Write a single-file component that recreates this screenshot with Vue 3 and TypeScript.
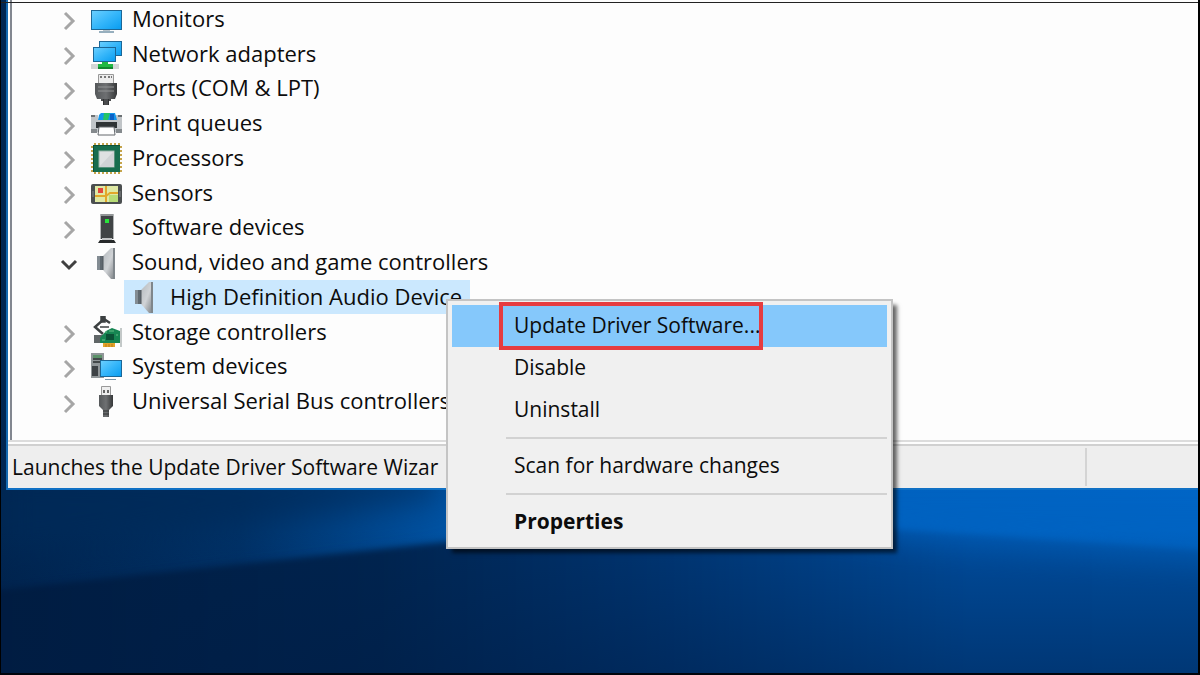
<script setup lang="ts">
import { ref } from 'vue'

interface Category {
  name: string
  icon: string
  children?: string[]
}

const categories: Category[] = [
  { name: 'Monitors', icon: 'monitor' },
  { name: 'Network adapters', icon: 'network' },
  { name: 'Ports (COM & LPT)', icon: 'port' },
  { name: 'Print queues', icon: 'printer' },
  { name: 'Processors', icon: 'cpu' },
  { name: 'Sensors', icon: 'sensor' },
  { name: 'Software devices', icon: 'tower' },
  { name: 'Sound, video and game controllers', icon: 'speaker', children: ['High Definition Audio Device'] },
  { name: 'Storage controllers', icon: 'storage' },
  { name: 'System devices', icon: 'system' },
  { name: 'Universal Serial Bus controllers', icon: 'usb' },
]

interface Row {
  name: string
  icon: string
  child: boolean
  open: boolean
}

const rows: Row[] = categories.flatMap((c) => [
  { name: c.name, icon: c.icon, child: false, open: !!c.children },
  ...(c.children ?? []).map((name) => ({ name, icon: c.icon, child: true, open: false })),
])

const selected = ref('High Definition Audio Device')

const menuGroups: { label: string; kind?: 'hot' | 'bold' }[][] = [
  [{ label: 'Update Driver Software...', kind: 'hot' }, { label: 'Disable' }, { label: 'Uninstall' }],
  [{ label: 'Scan for hardware changes' }],
  [{ label: 'Properties', kind: 'bold' }],
]
</script>

<template>
  <div class="desktop">
    <svg class="wallpaper" viewBox="0 0 1200 675" preserveAspectRatio="none" aria-hidden="true">
      <defs>
        <linearGradient id="base" x1="0" x2="1" y1="0" y2="0">
          <stop offset="0" stop-color="#002550" />
          <stop offset=".2" stop-color="#003268" />
          <stop offset=".37" stop-color="#0052a2" />
          <stop offset=".75" stop-color="#0062c0" />
          <stop offset="1" stop-color="#0066c8" />
        </linearGradient>
        <linearGradient id="lower" x1="0" x2="1" y1="0" y2="0">
          <stop offset="0" stop-color="#001c40" />
          <stop offset=".3" stop-color="#00244f" />
          <stop offset=".5" stop-color="#003470" />
          <stop offset=".75" stop-color="#004c9c" />
          <stop offset="1" stop-color="#004e9e" />
        </linearGradient>
        <linearGradient id="fade" x1="0" x2="0" y1="0" y2="1">
          <stop offset="0" stop-color="#001c44" stop-opacity="0" />
          <stop offset="1" stop-color="#001c44" stop-opacity=".45" />
        </linearGradient>
        <filter id="soft" x="-10%" y="-20%" width="120%" height="140%" color-interpolation-filters="sRGB">
          <feGaussianBlur stdDeviation="3" />
        </filter>
        <filter id="wide" x="-20%" y="-60%" width="140%" height="220%" color-interpolation-filters="sRGB">
          <feGaussianBlur stdDeviation="16" />
        </filter>
      </defs>
      <rect width="1200" height="675" fill="url(#base)" />
      <path d="M0 470H440V496L0 560Z" fill="#002a58" opacity=".7" filter="url(#wide)" />
      <path d="M-20 592L445 542L700 516L1300 556V760H-20Z" fill="url(#lower)" filter="url(#soft)" />
      <path d="M700 500L1240 500V566L900 540Z" fill="#0062c0" opacity=".7" filter="url(#wide)" />
      <rect y="530" width="1200" height="145" fill="url(#fade)" />
    </svg>

    <main class="window">
      <ul class="tree" role="tree" aria-label="Devices">
        <li v-for="row in rows" :key="row.name" class="row" :class="{ child: row.child }" role="treeitem" :aria-selected="selected === row.name">
          <button v-if="!row.child" class="caret" type="button" :aria-label="`Toggle ${row.name}`" :aria-expanded="row.open">
            <svg viewBox="0 0 20 20">
              <path v-if="row.open" d="M3 6L10 13L17 6" fill="none" stroke="#404040" stroke-width="3" />
              <path v-else d="M6 2L14 10L6 18" fill="none" stroke="#a6a6a6" stroke-width="3" />
            </svg>
          </button>
          <button class="node" :class="{ selected: selected === row.name }" type="button" @click="selected = row.name">
            <svg class="icon" viewBox="0 0 32 32" aria-hidden="true">
              <defs>
                <linearGradient id="screen" x1="0" y1="0" x2="1" y2="1">
                  <stop offset="0" stop-color="#6cd0ff" />
                  <stop offset=".5" stop-color="#35b6fa" />
                  <stop offset="1" stop-color="#079cf0" />
                </linearGradient>
                <linearGradient id="metal" x1="0" y1="0" x2="1" y2="1">
                  <stop offset="0" stop-color="#b4b9bd" />
                  <stop offset=".5" stop-color="#d0d3d6" />
                  <stop offset="1" stop-color="#777c80" />
                </linearGradient>
                <linearGradient id="dark" x1="0" x2="1">
                  <stop offset="0" stop-color="#55585a" />
                  <stop offset=".5" stop-color="#6e7072" />
                  <stop offset="1" stop-color="#363839" />
                </linearGradient>
              </defs>
              <g v-if="row.icon === 'monitor'">
                <rect x="1.5" y="7.5" width="30" height="19" fill="url(#screen)" stroke="#1b6797" />
                <path d="M13 27H20V28H13Z" fill="#b8c4cb" />
                <path d="M9 29H24" stroke="#7594a8" stroke-width="1.5" />
              </g>
              <g v-else-if="row.icon === 'network'">
                <rect x="9.5" y="3.5" width="22" height="14" fill="url(#screen)" stroke="#1b6797" />
                <rect x="3.5" y="9.5" width="22" height="14" fill="url(#screen)" stroke="#1b6797" />
                <rect x="1" y="26" width="28" height="5" fill="#d2d6d6" />
                <path d="M12 24H18V26H23V31H8V26H12Z" fill="#1fb843" />
                <path d="M8 30H23" stroke="#118630" stroke-width="2" />
              </g>
              <g v-else-if="row.icon === 'port'">
                <path d="M8.5 1.5H23.5V11H8.5Z" fill="#ececec" stroke="#999" />
                <path d="M10 4H12M14 4H16M18 4H20M21 4H22" stroke="#777" stroke-width="2" />
                <path d="M5 10H27V21L25 26H7L5 21Z" fill="url(#dark)" />
                <path d="M8 14H24M8 18H24" stroke="#929495" />
                <path d="M11 26H21V28H19V32H13V28H11Z" fill="#4a4c4e" />
                <path d="M13.5 26V32M18.5 26V32" stroke="#303233" />
              </g>
              <g v-else-if="row.icon === 'printer'">
                <path d="M1 7H8V12H25V7H32V24H1Z" fill="#c1c5c8" />
                <path d="M1 7H5V9H1ZM28 7H32V9H28Z" fill="#6b7073" />
                <path d="M9 7L11 5H25L27 12H8Z" fill="#1297ec" />
                <path d="M14 5H20L18 12H13Z" fill="#24c466" />
                <path d="M20 6H24V12H20Z" fill="#0b61c6" />
                <path d="M6 14H27V20H6Z" fill="#303436" />
                <path d="M1 21H7V25H1ZM26 21H32V25H26Z" fill="#858a8d" />
                <path d="M9 19H24L25 27H8Z" fill="#fff" stroke="#64696d" />
              </g>
              <g v-else-if="row.icon === 'cpu'">
                <path d="M4 2H30M4 31H30" stroke="#c5a44b" stroke-width="2" stroke-dasharray="2 2" />
                <path d="M2 4V30M31 4V30" stroke="#c5a44b" stroke-width="2" stroke-dasharray="2 2" />
                <rect x="3" y="3" width="27" height="27" fill="#176d4d" />
                <path d="M3.5 30V3.5H30" fill="none" stroke="#0d5239" />
                <rect x="9" y="9" width="15" height="16" fill="#dfe1e2" stroke="#9ab5aa" />
                <path d="M24 9V25H9Z" fill="#d0d3d5" />
              </g>
              <g v-else-if="row.icon === 'sensor'">
                <rect x="1" y="7" width="31" height="20" rx="2" fill="#4b4f50" />
                <rect x="5" y="9" width="23" height="16" fill="#dfe9a4" />
                <path d="M19 18H28V25H19Z" fill="#b7dc76" />
                <path d="M16 9V25M5 19H16L20 16H28" fill="none" stroke="#e2a72a" stroke-width="2" />
                <path d="M8 11H13V16H8Z" fill="#e3483c" />
                <path d="M3 14V20M30 14V20" stroke="#858989" />
              </g>
              <g v-else-if="row.icon === 'tower'">
                <path d="M10 2H24V27H10Z" fill="#404445" />
                <path d="M10 2H24V4H10Z" fill="#929697" />
                <path d="M10.5 2V27M23.5 2V27" stroke="#b2b5b6" />
                <path d="M15 7H19V11H15Z" fill="#29e43b" />
                <path d="M12 26H22V28H12Z" fill="#c0c3c4" />
                <path d="M10 28H24L26 31H8Z" fill="#272a2b" />
              </g>
              <g v-else-if="row.icon === 'speaker'">
                <path d="M7 9H13V23H7Z" fill="#606970" />
                <path d="M7 9H10V23H7Z" fill="#838c93" />
                <path d="M13 9L21 1H25V32H21L13 23Z" fill="url(#metal)" />
                <path d="M24 1V32" stroke="#7f868b" stroke-width="2" />
                <path d="M13 9V23" stroke="#4f575d" />
              </g>
              <g v-else-if="row.icon === 'storage'">
                <path d="M4 19H13V27H4Z" fill="#606667" />
                <path d="M20 7L14 3L5 11L13 18" fill="none" stroke="#3c4041" stroke-width="2.500" />
                <path d="M11 0L15 0L15 6L11 6ZM10 11H19" fill="#3c4041" stroke="#3c4041" stroke-width="1.500" />
                <path d="M10 22L16 15L22 12L30 15V27H10Z" fill="#168552" />
                <path d="M16 18H24V24H16Z" fill="#0b5135" />
                <path d="M15 16H17M19 15H24M12 24H15M26 19H28" stroke="#65bd83" />
                <path d="M13 27H25V31H13Z" fill="#e2a32b" />
                <path d="M16 28V31M19 28V31M22 28V31" stroke="#b87c18" />
                <path d="M31 12V31" stroke="#8a9493" />
              </g>
              <g v-else-if="row.icon === 'system'">
                <path d="M1 2H14V27H1Z" fill="#909698" />
                <path d="M3 4H12V7H3Z" fill="#5b9268" />
                <path d="M3 8H12M3 11H12" stroke="#434849" stroke-width="2" />
                <path d="M2 15H8V25H2Z" fill="#3d4245" />
                <rect x="10.5" y="9.5" width="21" height="16" fill="url(#screen)" stroke="#1b6797" />
                <path d="M15 28.5H26" stroke="#7594a8" />
              </g>
              <g v-else>
                <path d="M11.5 .5H20.5V10H11.5Z" fill="#eeeeee" stroke="#999" />
                <path d="M13 4H15V7H13ZM17 4H19V7H17Z" fill="#666" />
                <path d="M9 9H23V20L19 24V31H13V24L9 20Z" fill="url(#dark)" />
                <path d="M13 25H19M13 28H19" stroke="#303233" />
              </g>
            </svg>
            <span class="label">{{ row.name }}</span>
          </button>
        </li>
      </ul>
      <footer class="status">
        <span class="message">Launches the Update Driver Software Wizar</span>
        <span class="cell"></span>
      </footer>
    </main>

    <div class="menu" role="menu">
      <div v-for="(group, i) in menuGroups" :key="i" class="group">
        <button v-for="item in group" :key="item.label" class="item" :class="item.kind" type="button" role="menuitem">{{ item.label }}</button>
      </div>
    </div>
    <div class="frame"></div>
  </div>
</template>

<style>
body {
  margin: 0;
}
</style>

<style scoped>
.desktop {
  position: relative;
  min-height: 100vh;
  overflow: hidden;
  font: 22px/32px "Open Sans", "Noto Sans", sans-serif;
  color: #0c0c0c;
}
button {
  margin: 0;
  padding: 0;
  border: 0;
  background: none;
  font: inherit;
  color: inherit;
  text-align: left;
}
.wallpaper {
  position: absolute;
  inset: 0;
  width: 100%;
  height: 100%;
}
.window {
  position: relative;
  margin-left: 6px;
  border-left: 2px solid #1469b0;
  border-bottom: 2px solid #1070c4;
  background: #fdfdfd;
}
.tree {
  display: grid;
  grid-auto-rows: 1fr;
  box-sizing: border-box;
  height: 440px;
  margin: 0 0 0 2px;
  padding: 2px 0 21px 47px;
  border-left: 2px solid #828790;
  list-style: none;
}
.row {
  display: flex;
  align-items: center;
  min-height: 0;
}
.caret {
  width: 20px;
  height: 20px;
  margin: 4px 7px 0 0;
}
.caret svg {
  display: block;
}
.node {
  display: flex;
  align-items: center;
  gap: 10px;
  height: 34px;
  padding: 0 8px 0 4px;
  white-space: nowrap;
}
.child .node {
  margin-left: 65px;
}
.label {
  padding-bottom: 3px;
}
.selected {
  background: #cbe8fe;
}
.icon {
  flex: none;
  width: 32px;
  height: 32px;
}
.status {
  display: flex;
  height: 42px;
  padding-top: 4px;
  border-top: 2px solid #dcdcdc;
  background:
    linear-gradient(#fdfdfd 2px, #d0d0d0 2px, #d0d0d0 4px, #eee 4px);
}
.message {
  flex: 1;
  padding: 5px 0 0 4px;
  font-size: 21px;
  white-space: nowrap;
}
.cell {
  width: 9.5%;
  margin: 2px 0;
  border-left: 2px solid #d4d4d4;
}
.menu {
  position: absolute;
  left: 446px;
  top: 299px;
  box-sizing: border-box;
  width: 447px;
  padding: 4px;
  border: 2px solid #c4c4c4;
  background: #f0f0f0;
  box-shadow: 5px 5px 4px -1px rgba(0, 0, 0, 0.6);
  font-size: 21px;
}
.group + .group {
  padding-top: 14px;
  background: linear-gradient(#d2d2d2, #d2d2d2) 54px 6px / 100% 2px no-repeat;
}
.item {
  display: block;
  width: 100%;
  height: 42px;
  padding-left: 62px;
  line-height: 40px;
  padding-bottom: 2px;
}
.hot {
  position: relative;
  background: #85c8fb;
}
.hot::after {
  content: "";
  position: absolute;
  inset: -3px 124px -3px 47px;
  border: 4px solid #e63c40;
}
.bold {
  font-weight: 700;
}
.frame {
  position: absolute;
  inset: 0;
  border-left: 1px solid #000;
  border-right: 2px solid #000;
  border-bottom: 2px solid #00040c;
  pointer-events: none;
}
.frame::before {
  content: "";
  position: absolute;
  inset: 2px 0 auto;
  border-top: 1px solid #222;
}
</style>
